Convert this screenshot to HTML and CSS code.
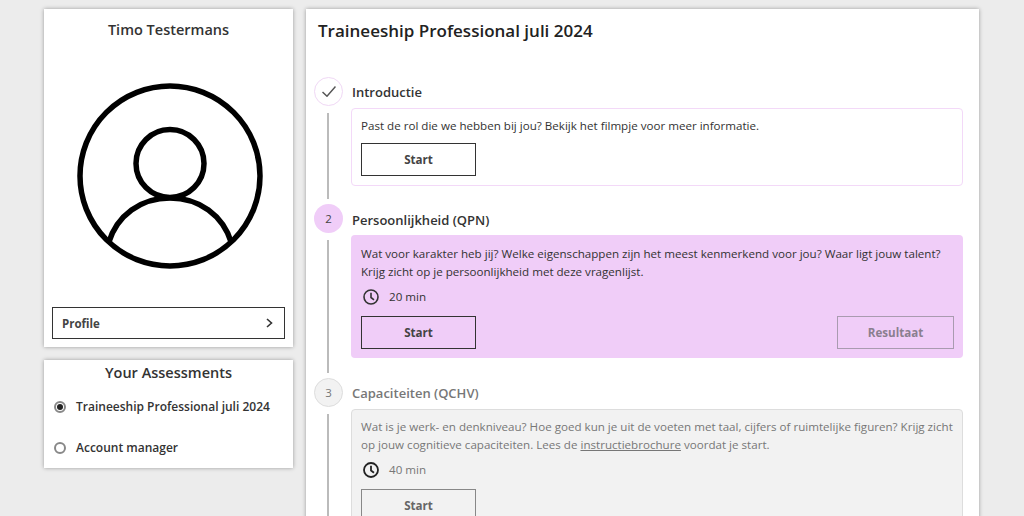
FILE: index.html
```html
<!DOCTYPE html>
<html lang="nl">
<head>
<meta charset="utf-8">
<title>Traineeship Professional juli 2024</title>
<link rel="stylesheet" href="styles.css">
</head>
<body>
<div class="page">
  <aside class="side">
    <section class="card profile">
      <h2 class="name">Timo Testermans</h2>
      <svg class="avatar" viewBox="0 0 186 186" fill="none" stroke="#000" stroke-width="5.5">
        <circle cx="93" cy="93" r="90"/>
        <circle cx="93" cy="80.5" r="34"/>
        <path d="M31.5 160C40 132 64 115 93 115C122 115 146 132 154.500 160"/>
      </svg>
      <a class="profile-btn"><span>Profile</span>
        <svg class="chev" viewBox="0 0 7 10" fill="none" stroke="#333" stroke-width="1.6"><path d="M1 1L5.500 5L1 9"/></svg>
      </a>
    </section>
    <section class="card assess">
      <h2 class="assess-title">Your Assessments</h2>
      <div class="radio-row"><span class="radio on"></span><span>Traineeship Professional juli 2024</span></div>
      <div class="radio-row"><span class="radio"></span><span>Account manager</span></div>
    </section>
  </aside>
  <main class="card main">
    <h1 class="title">Traineeship Professional juli 2024</h1>
    <div class="steps">
      <div class="step s1">
        <div class="marker">
          <div class="dot done"><svg viewBox="0 0 14 11" width="14" height="11" fill="none" stroke="#555" stroke-width="1.5"><path d="M.5 6L5 10.200L13.500 .5"/></svg></div>
          <div class="line"></div>
        </div>
        <div class="body">
          <h3 class="head">Introductie</h3>
          <div class="box outline">
            <p class="text">Past de rol die we hebben bij jou? Bekijk het filmpje voor meer informatie.</p>
            <div class="actions"><a class="btn">Start</a></div>
          </div>
        </div>
      </div>
      <div class="step s2">
        <div class="marker">
          <div class="dot active">2</div>
          <div class="line"></div>
        </div>
        <div class="body">
          <h3 class="head">Persoonlijkheid (QPN)</h3>
          <div class="box filled">
            <p class="text">Wat voor karakter heb jij? Welke eigenschappen zijn het meest kenmerkend voor jou? Waar ligt jouw talent? Krijg zicht op je persoonlijkheid met deze vragenlijst.</p>
            <div class="time">
              <svg class="clock" viewBox="0 0 16 16" fill="none" stroke="#333" stroke-width="1.6"><circle cx="8" cy="8" r="7"/><path d="M8 3.800V8.500L11 10.800"/></svg>
              <span>20 min</span>
            </div>
            <div class="actions"><a class="btn">Start</a><a class="btn faded">Resultaat</a></div>
          </div>
        </div>
      </div>
      <div class="step s3">
        <div class="marker">
          <div class="dot locked">3</div>
          <div class="line"></div>
        </div>
        <div class="body">
          <h3 class="head muted">Capaciteiten (QCHV)</h3>
          <div class="box grey">
            <p class="text">Wat is je werk- en denkniveau? Hoe goed kun je uit de voeten met taal, cijfers of ruimtelijke figuren? Krijg zicht op jouw cognitieve capaciteiten. Lees de <u>instructiebrochure</u> voordat je start.</p>
            <div class="time">
              <svg class="clock" viewBox="0 0 16 16" fill="none" stroke="#222" stroke-width="1.8"><circle cx="8" cy="8" r="7"/><path d="M8 3.800V8.500L11 10.800"/></svg>
              <span>40 min</span>
            </div>
            <div class="actions"><a class="btn dim">Start</a></div>
          </div>
        </div>
      </div>
    </div>
  </main>
</div>
</body>
</html>
```
FILE: styles.css
```css
* { box-sizing: border-box; }
html, body { margin: 0; height: 516px; overflow: hidden; }
body { background: #ececec; font-family: "Open Sans", sans-serif; color: #333; }
h1, h2, h3, p { margin: 0; }
.page { display: flex; align-items: flex-start; gap: 13px; padding: 9px 0 0 44px; height: 516px; overflow: hidden; }
.side { width: 249px; display: flex; flex-direction: column; gap: 13px; flex: none; }
.card { background: #fff; box-shadow: 0 0 4px rgba(0,0,0,.35); }
.profile { height: 338px; display: flex; flex-direction: column; align-items: center; padding: 12px 8px 8px; }
.name { font-size: 14.5px; font-weight: 600; line-height: 18px; color: #333; }
.avatar { width: 186px; height: 186px; margin: 44px 0 0 3px; display: block; }
.profile-btn { margin-top: auto; align-self: stretch; height: 32px; border: 1px solid #333; display: flex; align-items: center; justify-content: space-between; padding: 0 11px 0 9px; font-size: 11.5px; font-weight: 700; color: #444; }
.chev { width: 7px; height: 10px; }
.assess { height: 108px; padding: 3px 9px 0; }
.assess-title { font-size: 14.500px; font-weight: 600; line-height: 20px; text-align: center; color: #333; }
.radio-row { display: flex; align-items: center; gap: 10px; font-size: 12px; font-weight: 600; color: #333; margin-top: 25px; line-height: 16px; padding-left: 1px; }
.radio-row:first-of-type { margin-top: 16px; }
.radio { width: 12px; height: 12px; border: 2px solid #888; border-radius: 50%; flex: none; display: flex; align-items: center; justify-content: center; }
.radio.on::after { content: ""; width: 6px; height: 6px; border-radius: 50%; background: #222; }
.main { width: 673px; height: 600px; flex: none; padding: 10px 16px 0 8px; }
.title { font-size: 17px; font-weight: 600; line-height: 24px; color: #222; padding-left: 4px; }
.steps { margin-top: 35px; }
.step { display: flex; gap: 8px; }
.marker { width: 29px; flex: none; display: flex; flex-direction: column; align-items: flex-start; margin-top: -1px; }
.dot { width: 29px; height: 29px; margin-bottom: 1px; border-radius: 50%; flex: none; display: flex; align-items: center; justify-content: center; font-size: 11.500px; color: #444; }
.dot.done { border: 1px solid #f0d8f5; }
.dot.active { background: #f0cdf8; }
.dot.locked { background: #f2f2f2; border: 1px solid #ddd; color: #777; }
.line { flex: 1; width: 2px; background: #bbb; margin: 6px 0 6px 13px; }
.body { flex: 1; min-width: 0; }
.s1 .body { padding-bottom: 19px; }
.s2 .body { padding-bottom: 21px; }
.head { font-size: 13px; font-weight: 600; line-height: 29px; height: 30px; padding-left: 1px; color: #333; }
.s2 .head { line-height: 31px; }
.head.muted { color: #777; }
.box { border-radius: 4px; padding: 8px 9px; font-size: 11.600px; line-height: 18px; color: #333; }
.outline { height: 78px; border: 1px solid #f3d9f8; }
.filled { height: 123px; background: #f0cdf8; padding: 10px 9px 9px 10px; }
.grey { background: #f2f2f2; border: 1px solid #ddd; color: #777; height: 130px; }
.actions { display: flex; justify-content: space-between; margin-top: 8px; }
.time + .actions { margin-top: 10px; }
.btn { width: 115px; height: 33px; border: 1px solid #333; display: flex; align-items: center; justify-content: center; font-size: 11.600px; font-weight: 700; color: #444; }
.btn.faded { width: 117px; border-color: #a99bb0; color: #8a7f8f; }
.btn.dim { border-color: #888; color: #666; }
.time { display: flex; align-items: center; gap: 10px; margin-top: 7px; height: 18px; padding-left: 2px; }
.clock { width: 16px; height: 16px; flex: none; }
```
